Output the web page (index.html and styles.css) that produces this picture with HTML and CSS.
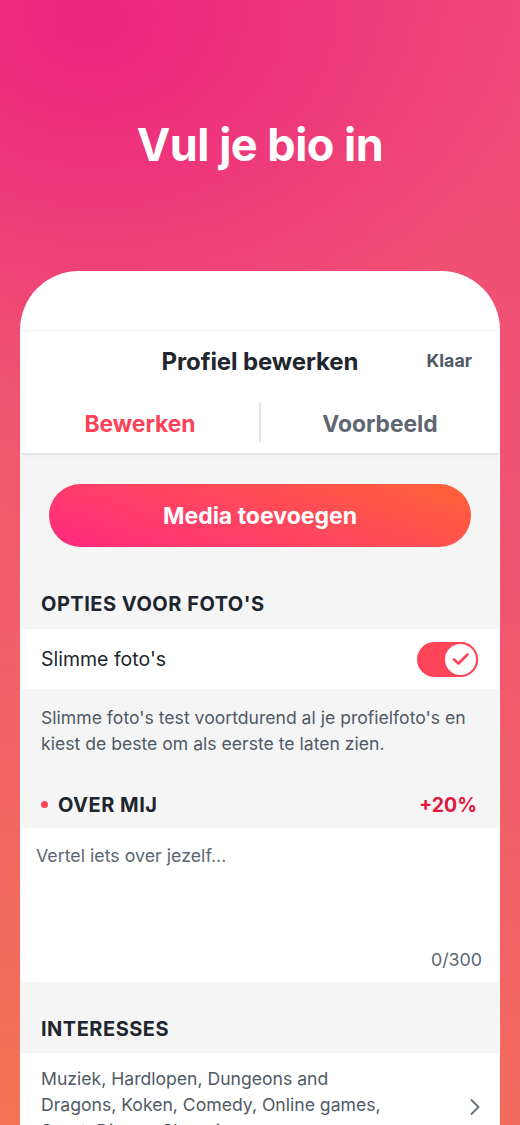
FILE: index.html
```html
<!DOCTYPE html>
<html lang="nl">
<head>
<meta charset="utf-8">
<link rel="stylesheet" href="styles.css">
</head>
<body>
<div class="screen">
  <h1 class="headline">Vul je bio in</h1>
  <div class="card">
    <div class="card-top"></div>
    <div class="navbar">
      <div class="nav-title">Profiel bewerken</div>
      <div class="nav-done">Klaar</div>
    </div>
    <div class="tabs">
      <div class="tab tab-active">Bewerken</div>
      <div class="tab-divider"></div>
      <div class="tab">Voorbeeld</div>
    </div>
    <div class="content">
      <div class="btn-wrap"><div class="btn-media">Media toevoegen</div></div>
      <div class="section-head">OPTIES VOOR FOTO'S</div>
      <div class="row-white row-toggle">
        <span class="row-label">Slimme foto's</span>
        <div class="toggle">
          <div class="knob">
            <svg width="18" height="14" viewBox="0 0 18 14"><path d="M2 7.5 L6.5 11.5 L15.5 2.5" fill="none" stroke="#fe3f57" stroke-width="2.6" stroke-linecap="round" stroke-linejoin="round"/></svg>
          </div>
        </div>
      </div>
      <p class="desc">Slimme foto's test voortdurend al je profielfoto's en kiest de beste om als eerste te laten zien.</p>
      <div class="section-head section-split">
        <span class="with-dot"><span class="dot"></span>OVER MIJ</span>
        <span class="boost">+20%</span>
      </div>
      <div class="bio-box">
        <div class="placeholder">Vertel iets over jezelf...</div>
        <div class="counter">0/300</div>
      </div>
      <div class="section-head section-tall">INTERESSES</div>
      <div class="row-white row-interests">
        <span class="interests-text">Muziek, Hardlopen, Dungeons and Dragons, Koken, Comedy, Online games, Sport, Disney, Shopping</span>
        <svg class="chevron" width="12" height="18" viewBox="0 0 12 18"><path d="M2.5 2 L9.5 9 L2.5 16" fill="none" stroke="#6b7480" stroke-width="2" stroke-linecap="round" stroke-linejoin="round"/></svg>
      </div>
    </div>
  </div>
</div>
</body>
</html>
```
FILE: styles.css
```css
* { box-sizing: border-box; }
html, body { margin: 0; padding: 0; }
body {
  width: 520px;
  height: 1125px;
  overflow: hidden;
  font-family: "Inter", "Lato", sans-serif;
}
.screen {
  width: 520px;
  height: 1125px;
  overflow: hidden;
  background:
    radial-gradient(ellipse 460px 380px at 90px 20px, rgba(236,33,128,0.95), rgba(236,33,128,0) 100%),
    linear-gradient(200deg, #f04a79 0%, #f0566f 45%, #f26563 75%, #f37454 100%);
  display: flex;
  flex-direction: column;
  align-items: center;
}
.headline {
  margin: 117px 0 0;
  height: 154px;
  flex-shrink: 0;
  font-size: 45px;
  font-weight: 700;
  color: #fff;
  letter-spacing: -0.5px;
  line-height: 56px;
}
.card {
  width: 480px;
  flex: 1 0 auto;
  background: #fff;
  border: 1px solid rgba(255,255,255,0.45);
  border-bottom: 0;
  border-radius: 59px 59px 0 0;
  overflow: hidden;
  display: flex;
  flex-direction: column;
}
.card > * { flex-shrink: 0; }
.card-top {
  height: 59px;
  border-bottom: 1px solid #f2f2f2;
}
.navbar {
  height: 60px;
  position: relative;
  display: flex;
  align-items: center;
  justify-content: center;
}
.nav-title {
  font-size: 24px;
  font-weight: 700;
  color: #21262e;
  letter-spacing: -0.1px;
}
.nav-done {
  position: absolute;
  right: 27px;
  top: 19px;
  font-size: 17.8px;
  font-weight: 700;
  color: #505965;
}
.tabs {
  height: 62px;
  display: flex;
  align-items: center;
  box-shadow: 0 2px 3px rgba(0,0,0,0.08);
  position: relative;
  z-index: 1;
}
.tab {
  flex: 1;
  text-align: center;
  font-size: 22.8px;
  font-weight: 700;
  color: #5d6672;
  padding-top: 2px;
}
.tab-active { color: #fd4257; }
.tab-divider {
  width: 2px;
  height: 40px;
  background: #e6e6e6;
}
.content {
  flex: 1 0 auto;
  background: #f5f5f5;
  display: flex;
  flex-direction: column;
}
.content > * { flex-shrink: 0; }
.btn-wrap {
  padding: 31px 28px 0;
}
.btn-media {
  height: 63px;
  border-radius: 32px;
  background: linear-gradient(20deg, #fe2a80 0%, #ff4a5a 55%, #ff6236 100%);
  color: #fff;
  font-size: 23px;
  font-weight: 700;
  display: flex;
  align-items: center;
  justify-content: center;
}
.section-head {
  height: 82px;
  padding: 0 20px 13px 20px;
  display: flex;
  align-items: flex-end;
  font-size: 20px;
  font-weight: 700;
  color: #21262e;
  letter-spacing: 0.5px;
}
.section-split {
  height: 71px;
  justify-content: space-between;
  align-items: center;
  padding: 24px 22px 0 20px;
}
.section-tall { height: 71px; padding-bottom: 12px; }
.with-dot { display: flex; align-items: center; }
.dot {
  width: 7px; height: 7px;
  border-radius: 50%;
  background: #fd4257;
  margin: 0 10px 0 0;
}
.boost { color: #e3173e; font-size: 19.5px; letter-spacing: 0; }
.row-white {
  background: #fff;
  padding: 0 20px;
  display: flex;
  align-items: center;
  justify-content: space-between;
}
.row-toggle { height: 60px; }
.row-label { font-size: 19.5px; color: #21262e; }
.toggle {
  width: 61px; height: 35px;
  border-radius: 18px;
  background: #fe4458;
  display: flex;
  justify-content: flex-end;
  align-items: center;
  margin-right: 1px;
}
.knob {
  width: 35px; height: 35px;
  border-radius: 50%;
  background: #fff;
  border: 2px solid #fe4458;
  display: flex;
  align-items: center;
  justify-content: center;
}
.desc {
  margin: 0;
  padding: 16px 20px 0 20px;
  font-size: 17.6px;
  line-height: 26px;
  color: #505965;
}
.bio-box {
  height: 154px;
  background: #fff;
  padding: 17px 17px 12px 15px;
  display: flex;
  flex-direction: column;
  justify-content: space-between;
}
.placeholder { font-size: 17.8px; color: #5d6672; }
.counter { text-align: right; font-size: 17.8px; color: #5d6672; }
.row-interests {
  align-items: center;
  padding: 13px 18px 0 20px;
}
.interests-text {
  width: 355px;
  font-size: 17.6px;
  line-height: 26px;
  color: #505965;
}
.chevron { margin-top: 4px; }
```
